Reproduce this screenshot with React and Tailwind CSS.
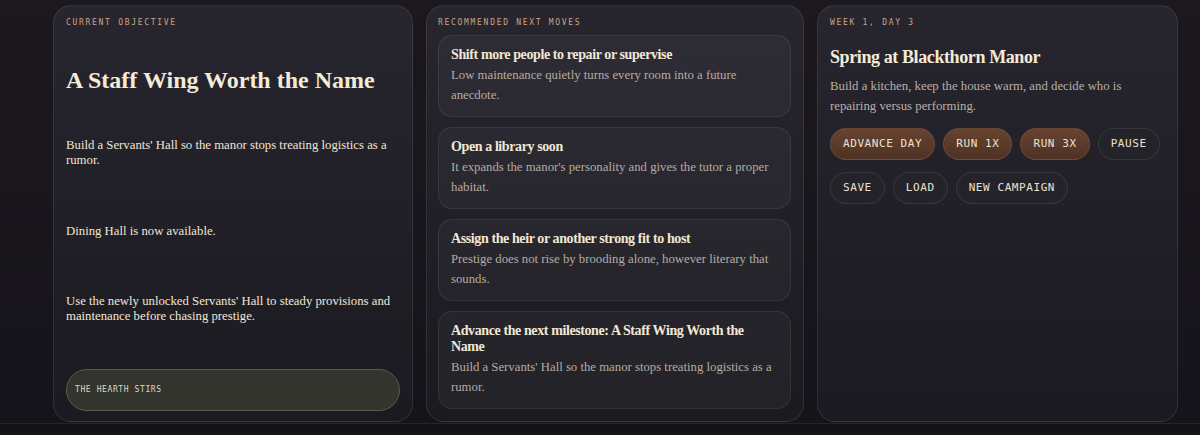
const serif = { fontFamily: '"Liberation Serif", "DejaVu Serif", serif' };
const mono = { fontFamily: '"DejaVu Sans Mono", "Liberation Mono", monospace' };

const moves = [
  {
    title: "Shift more people to repair or supervise",
    text: "Low maintenance quietly turns every room into a future anecdote.",
  },
  {
    title: "Open a library soon",
    text: "It expands the manor's personality and gives the tutor a proper habitat.",
  },
  {
    title: "Assign the heir or another strong fit to host",
    text: "Prestige does not rise by brooding alone, however literary that sounds.",
  },
  {
    title: "Advance the next milestone: A Staff Wing Worth the Name",
    text: "Build a Servants' Hall so the manor stops treating logistics as a rumor.",
  },
];

function Label({ children }) {
  return (
    <p
      style={mono}
      className="text-[8px] leading-[12px] tracking-[1.7px] uppercase text-[#c9a589]"
    >
      {children}
    </p>
  );
}

function Pill({ children, warm }) {
  return (
    <button
      style={mono}
      className={`h-8 px-3 rounded-full text-[11px] tracking-[0.58px] uppercase text-[#ece2d2] border ${
        warm
          ? "bg-gradient-to-b from-[#684330] to-[#4e3224] border-[#7a5441]/60"
          : "bg-[#25232a] border-white/[0.09]"
      }`}
    >
      {children}
    </button>
  );
}

export default function App() {
  return (
    <div className="min-h-[435px] bg-gradient-to-b from-[#1c181d] to-[#15141b] overflow-hidden">
      <div className="pl-[53px] pr-[22px] pt-[5px]">
        <div className="grid grid-cols-[360px_378px_361px] gap-[13px] h-[417px]">
          <section className="flex flex-col rounded-[18px] border border-white/[0.09] bg-gradient-to-b from-[#27252e] to-[#1b1a20] px-[12px] pt-[11px] pb-[10px]">
            <Label>Current objective</Label>
            <h1
              style={serif}
              className="mt-[36px] text-[24px] leading-[30px] font-bold text-[#f3ead8]"
            >
              A Staff Wing Worth the Name
            </h1>
            <p style={serif} className="mt-[43px] text-[12.75px] leading-[15px] text-[#efe6d6]">
              Build a Servants' Hall so the manor stops treating logistics as a rumor.
            </p>
            <p style={serif} className="mt-[56px] text-[12.75px] leading-[15px] text-[#efe6d6]">
              Dining Hall is now available.
            </p>
            <p style={serif} className="mt-[55px] text-[12.75px] leading-[15px] text-[#efe6d6]">
              Use the newly unlocked Servants' Hall to steady provisions and maintenance before chasing prestige.
            </p>
            <div className="mt-auto h-[42px] flex items-center rounded-full border border-[#5b5b4a] bg-[#32342d] px-[8px]">
              <span style={mono} className="text-[8px] tracking-[0.6px] text-[#dcd8c6] uppercase">
                The hearth stirs
              </span>
            </div>
          </section>

          <section className="flex flex-col rounded-[18px] border border-white/[0.09] bg-gradient-to-b from-[#27252e] to-[#1b1a20] pl-[11px] pr-[12px] pt-[11px] pb-[10px]">
            <Label>Recommended next moves</Label>
            <div className="mt-[6px] flex flex-col gap-[10px]">
              {moves.map((m) => (
                <div
                  key={m.title}
                  className="rounded-[14px] border border-white/[0.07] bg-white/[0.035] px-3 pt-[11px] pb-[11px]"
                >
                  <h3
                    style={serif}
                    className="text-[14px] leading-[16px] font-bold text-[#f1e7d6] tracking-[-0.4px]"
                  >
                    {m.title}
                  </h3>
                  <p style={serif} className="mt-[2px] text-[12.75px] leading-[20px] text-[#b5aca2]">
                    {m.text}
                  </p>
                </div>
              ))}
            </div>
          </section>

          <section className="flex flex-col rounded-[18px] border border-white/[0.09] bg-gradient-to-b from-[#27252e] to-[#1b1a20] px-3 pt-[11px] pb-[10px]">
            <Label>Week 1, Day 3</Label>
            <h2
              style={serif}
              className="mt-[16px] text-[18px] leading-[24px] font-bold text-[#f3ead8] tracking-[-0.4px]"
            >
              Spring at Blackthorn Manor
            </h2>
            <p style={serif} className="mt-[7px] text-[12.8px] leading-[20px] text-[#b9b0a5]">
              Build a kitchen, keep the house warm, and decide who is repairing versus performing.
            </p>
            <div className="mt-3 flex flex-wrap gap-x-2 gap-y-3">
              <Pill warm>Advance Day</Pill>
              <Pill warm>Run 1x</Pill>
              <Pill warm>Run 3x</Pill>
              <Pill>Pause</Pill>
              <Pill>Save</Pill>
              <Pill>Load</Pill>
              <Pill>New Campaign</Pill>
            </div>
          </section>
        </div>
      </div>
      <div className="mt-[1px] h-[14px] border-t border-white/[0.08] bg-[#141318]" />
    </div>
  );
}
